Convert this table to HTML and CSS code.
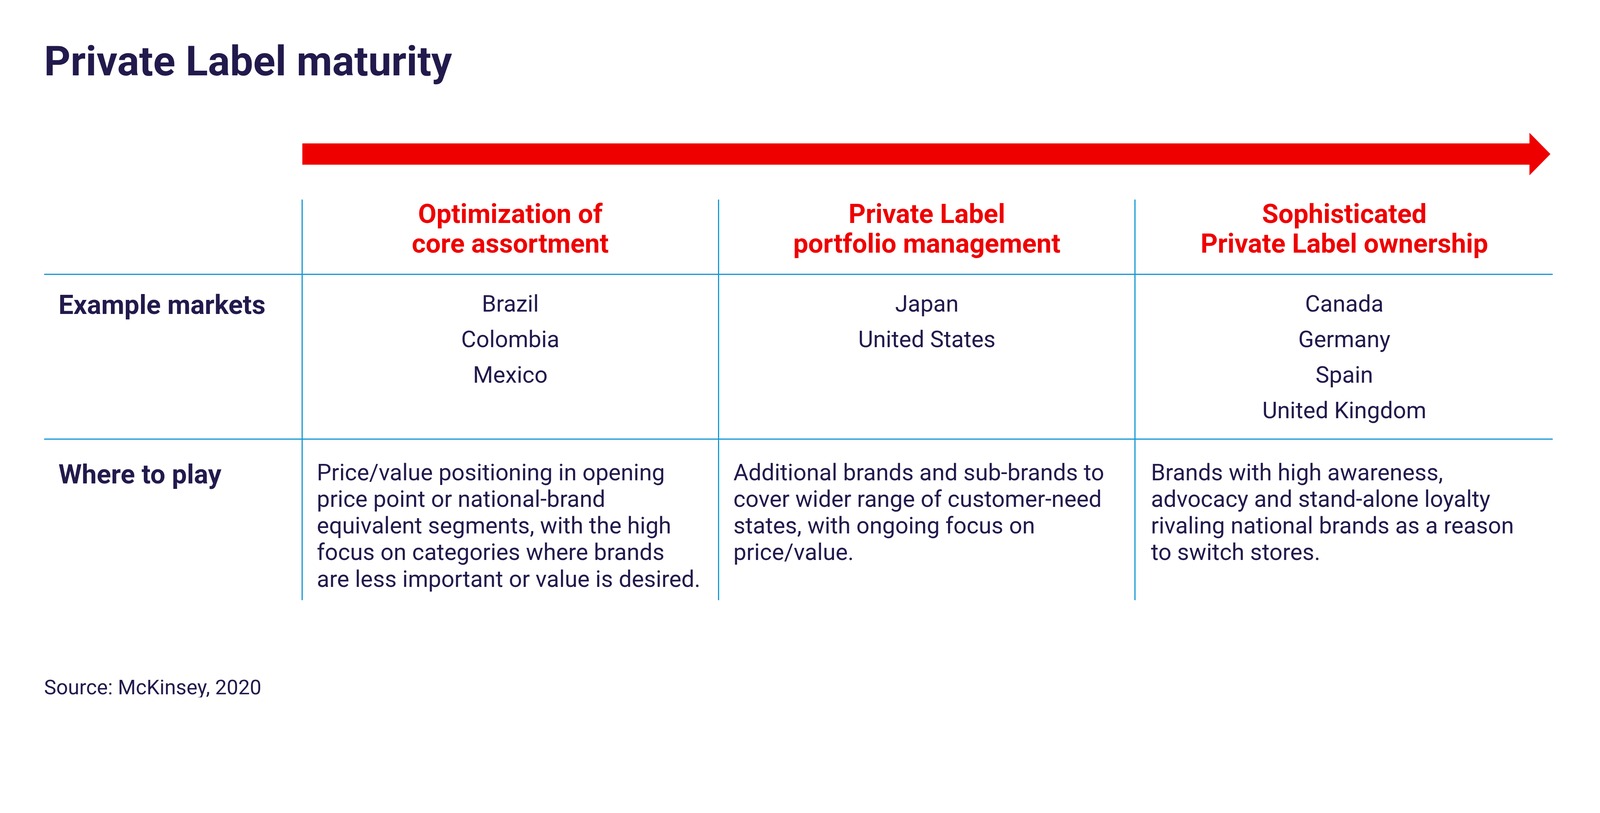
FILE: index.html
```html
<!DOCTYPE html>
<html lang="en">
<head>
<meta charset="utf-8">
<title>Private Label maturity</title>
<link rel="stylesheet" href="styles.css">
</head>
<body>
<div class="page">
  <h1 class="title">Private Label maturity</h1>
  <svg class="arrow" width="3195" height="109" viewBox="0 0 3514 120" preserveAspectRatio="none" aria-hidden="true">
    <rect x="0" y="30" width="3456" height="60" fill="#ee0000"/>
    <polygon points="3455,0 3514,60 3455,120" fill="#ee0000"/>
  </svg>
  <div class="matrix">
    <div class="cell head-empty"></div>
    <div class="cell col head">Optimization of<br>core assortment</div>
    <div class="cell col head">Private Label<br>portfolio management</div>
    <div class="cell col head">Sophisticated<br>Private Label ownership</div>

    <div class="cell label label-markets">Example markets</div>
    <div class="cell col markets">Brazil<br>Colombia<br>Mexico</div>
    <div class="cell col markets">Japan<br>United States</div>
    <div class="cell col markets">Canada<br>Germany<br>Spain<br>United Kingdom</div>

    <div class="cell label label-play">Where to play</div>
    <div class="cell col play">Price/value positioning in opening<br>price point or national-brand<br>equivalent segments, with the high<br>focus on categories where brands<br>are less important or value is desired.</div>
    <div class="cell col play">Additional brands and sub-brands to<br>cover wider range of customer-need<br>states, with ongoing focus on<br>price/value.</div>
    <div class="cell col play play-last">Brands with high awareness,<br>advocacy and stand-alone loyalty<br>rivaling national brands as a reason<br>to switch stores.</div>
  </div>
  <p class="source">Source: McKinsey, 2020</p>
</div>
</body>
</html>
```

FILE: styles.css
```css
* {
  box-sizing: border-box;
}

html, body {
  margin: 0;
  padding: 0;
  background: #ffffff;
}

body {
  font-family: Roboto, "Liberation Sans", Arial, sans-serif;
  color: #221a4c;
}

.page {
  padding: 104.5px 0 0 112.7px;
}

.title {
  margin: 0;
  font-size: 105.5px;
  line-height: 105.5px;
  font-weight: 700;
  color: #221a4c;
}

.arrow {
  display: block;
  margin: 130px 0 0 661px;
}

.matrix {
  margin-top: 62px;
  display: grid;
  grid-template-columns: 659px 1066.4px 1066.4px 1071px;
  grid-template-rows: 190px 421.8px 414.5px;
}

.cell {
  white-space: nowrap;
}

.col {
  border-left: 3.6px solid #1598d3;
}

.head {
  text-align: center;
  color: #ee0000;
  font-weight: 700;
  font-size: 68.2px;
  line-height: 75.5px;
}

.label,
.markets,
.play {
  border-top: 3.6px solid #1598d3;
}

.label {
  font-weight: 700;
  font-size: 68.2px;
  line-height: 75.5px;
  padding-left: 37px;
}

.label-markets {
  padding-top: 40px;
}

.label-play {
  padding-top: 52.7px;
}

.markets {
  text-align: center;
  font-size: 59.1px;
  line-height: 90.9px;
  padding-top: 29px;
}

.play {
  font-size: 59.1px;
  line-height: 68.2px;
  padding: 50px 0 0 36.4px;
}

.play-last {
  padding-left: 39px;
}

.source {
  margin: 196.4px 0 0 0;
  font-size: 52.7px;
  line-height: 52.7px;
}
```
